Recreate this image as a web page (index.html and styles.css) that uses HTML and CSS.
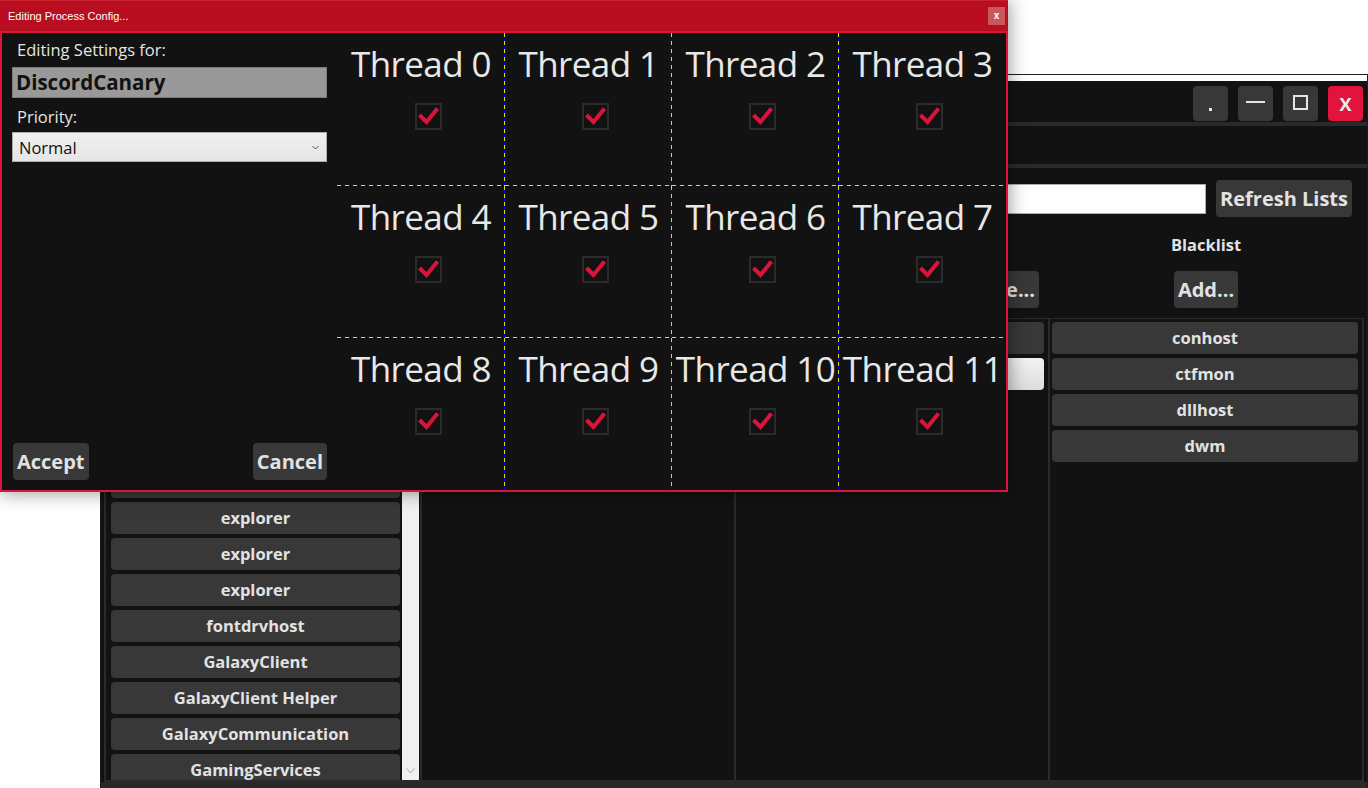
FILE: index.html
```html
<!DOCTYPE html>
<html>
<head>
<meta charset="utf-8">
<link rel="stylesheet" href="styles.css">
</head>
<body>
<div class="bgwin">
  <div class="bgwin-top"></div>
  <div class="win-bar">
    <div class="wbtn"><span class="ic-dot"></span></div>
    <div class="wbtn"><span class="ic-dash"></span></div>
    <div class="wbtn"><span class="ic-sq"></span></div>
    <div class="wbtn wbtn-close">X</div>
  </div>
  <div class="sep"></div>
  <div class="menu-row"></div>
  <div class="sep"></div>
  <div class="content">
    <div class="search-row">
      <div class="search-box"></div>
      <div class="btn">Refresh Lists</div>
    </div>
    <div class="cols labels">
      <div class="col-lbl"></div>
      <div class="col-lbl"></div>
      <div class="col-lbl"></div>
      <div class="col-lbl">Blacklist</div>
    </div>
    <div class="cols actions">
      <div class="col-act"></div>
      <div class="col-act"></div>
      <div class="col-act act-right"><div class="btn">Remove...</div></div>
      <div class="col-act"><div class="btn">Add...</div></div>
    </div>
    <div class="lists">
      <div class="lcol lcol-first">
        <div class="items">
          <div class="item"></div>
          <div class="item"></div>
          <div class="item"></div>
          <div class="item"></div>
          <div class="item"></div>
          <div class="item">explorer</div>
          <div class="item">explorer</div>
          <div class="item">explorer</div>
          <div class="item">fontdrvhost</div>
          <div class="item">GalaxyClient</div>
          <div class="item">GalaxyClient Helper</div>
          <div class="item">GalaxyCommunication</div>
          <div class="item">GamingServices</div>
        </div>
        <div class="scrollbar">
          <svg class="sb-arrow" width="9" height="6" viewBox="0 0 9 6"><path d="M0.5 0.5 L4.5 5 L8.5 0.5" fill="none" stroke="#a6a6a6" stroke-width="1"/></svg>
        </div>
      </div>
      <div class="lcol"></div>
      <div class="lcol">
        <div class="item"></div>
        <div class="item item-sel"></div>
      </div>
      <div class="lcol">
        <div class="item">conhost</div>
        <div class="item">ctfmon</div>
        <div class="item">dllhost</div>
        <div class="item">dwm</div>
      </div>
    </div>
  </div>
  <div class="bgwin-bottom"></div>
</div>

<div class="dialog">
  <div class="dlg-title">
    <span class="dlg-title-text">Editing Process Config...</span>
    <span class="dlg-close">x</span>
  </div>
  <div class="dlg-body">
    <div class="settings">
      <div class="s-label">Editing Settings for:</div>
      <div class="namebox">DiscordCanary</div>
      <div class="s-label s-label2">Priority:</div>
      <div class="select">
        <span>Normal</span>
        <svg width="7" height="5" viewBox="0 0 7 5"><path d="M0.5 1 L3.5 4 L6.5 1" fill="none" stroke="#555" stroke-width="1"/></svg>
      </div>
      <div class="dlg-buttons">
        <div class="btn">Accept</div>
        <div class="btn">Cancel</div>
      </div>
    </div>
    <div class="threads">
      <div class="cell"><div class="t-name">Thread 0</div><div class="chk"><svg viewBox="0 0 23 23" width="23" height="23"><path d="M2.5 10 L9.5 17 L20.5 3.5" fill="none" stroke="#dc143c" stroke-width="4"/></svg></div></div>
      <div class="cell"><div class="t-name">Thread 1</div><div class="chk"><svg viewBox="0 0 23 23" width="23" height="23"><path d="M2.5 10 L9.5 17 L20.5 3.5" fill="none" stroke="#dc143c" stroke-width="4"/></svg></div></div>
      <div class="cell"><div class="t-name">Thread 2</div><div class="chk"><svg viewBox="0 0 23 23" width="23" height="23"><path d="M2.5 10 L9.5 17 L20.5 3.5" fill="none" stroke="#dc143c" stroke-width="4"/></svg></div></div>
      <div class="cell"><div class="t-name">Thread 3</div><div class="chk"><svg viewBox="0 0 23 23" width="23" height="23"><path d="M2.5 10 L9.5 17 L20.5 3.5" fill="none" stroke="#dc143c" stroke-width="4"/></svg></div></div>
      <div class="cell"><div class="t-name">Thread 4</div><div class="chk"><svg viewBox="0 0 23 23" width="23" height="23"><path d="M2.5 10 L9.5 17 L20.5 3.5" fill="none" stroke="#dc143c" stroke-width="4"/></svg></div></div>
      <div class="cell"><div class="t-name">Thread 5</div><div class="chk"><svg viewBox="0 0 23 23" width="23" height="23"><path d="M2.5 10 L9.5 17 L20.5 3.5" fill="none" stroke="#dc143c" stroke-width="4"/></svg></div></div>
      <div class="cell"><div class="t-name">Thread 6</div><div class="chk"><svg viewBox="0 0 23 23" width="23" height="23"><path d="M2.5 10 L9.5 17 L20.5 3.5" fill="none" stroke="#dc143c" stroke-width="4"/></svg></div></div>
      <div class="cell"><div class="t-name">Thread 7</div><div class="chk"><svg viewBox="0 0 23 23" width="23" height="23"><path d="M2.5 10 L9.5 17 L20.5 3.5" fill="none" stroke="#dc143c" stroke-width="4"/></svg></div></div>
      <div class="cell"><div class="t-name">Thread 8</div><div class="chk"><svg viewBox="0 0 23 23" width="23" height="23"><path d="M2.5 10 L9.5 17 L20.5 3.5" fill="none" stroke="#dc143c" stroke-width="4"/></svg></div></div>
      <div class="cell"><div class="t-name">Thread 9</div><div class="chk"><svg viewBox="0 0 23 23" width="23" height="23"><path d="M2.5 10 L9.5 17 L20.5 3.5" fill="none" stroke="#dc143c" stroke-width="4"/></svg></div></div>
      <div class="cell"><div class="t-name">Thread 10</div><div class="chk"><svg viewBox="0 0 23 23" width="23" height="23"><path d="M2.5 10 L9.5 17 L20.5 3.5" fill="none" stroke="#dc143c" stroke-width="4"/></svg></div></div>
      <div class="cell"><div class="t-name">Thread 11</div><div class="chk"><svg viewBox="0 0 23 23" width="23" height="23"><path d="M2.5 10 L9.5 17 L20.5 3.5" fill="none" stroke="#dc143c" stroke-width="4"/></svg></div></div>
    </div>
  </div>
</div>
</body>
</html>
```

FILE: styles.css
```css
html, body {
  margin: 0;
  padding: 0;
}
body {
  width: 1368px;
  height: 788px;
  overflow: hidden;
  background: #ffffff;
  position: relative;
  font-family: "Open Sans", "Noto Sans", sans-serif;
}

/* ---------- background window ---------- */
.bgwin {
  position: absolute;
  left: 100px;
  top: 74px;
  width: 1268px;
  height: 714px;
  box-sizing: border-box;
  border: 1px solid #1c1c1c;
  border-bottom: 0;
  background: #121212;
  display: flex;
  flex-direction: column;
}
.bgwin-top {
  height: 6px;
  background: #ffffff;
}
.win-bar {
  height: 41px;
  box-sizing: border-box;
  padding: 5px 4px 0 0;
  display: flex;
  justify-content: flex-end;
  align-items: flex-start;
  gap: 10px;
}
.wbtn {
  width: 35px;
  height: 35px;
  border-radius: 4px;
  background: #383838;
  display: flex;
  align-items: center;
  justify-content: center;
  color: #e6e6e6;
}
.ic-dot {
  width: 3px;
  height: 3px;
  background: #e6e6e6;
  margin-top: 11px;
}
.ic-dash {
  width: 19px;
  height: 2px;
  background: #e6e6e6;
  margin-top: -3px;
}
.ic-sq {
  width: 11px;
  height: 11px;
  border: 2px solid #e6e6e6;
  margin-top: -2px;
}
.wbtn-close {
  background: #e0143c;
  font-weight: 700;
  font-size: 18px;
  line-height: 1;
  color: #eeeeee;
}
.sep {
  height: 4px;
  background: #2a2a2a;
}
.menu-row {
  height: 38px;
}
.content {
  flex: 1;
  min-height: 0;
  display: flex;
  flex-direction: column;
  padding: 0 3px;
}
.search-row {
  display: flex;
  align-items: center;
  justify-content: flex-end;
  gap: 10px;
  padding: 12px 12px 0 0;
}
.search-box {
  width: 560px;
  height: 30px;
  box-sizing: border-box;
  background: #ffffff;
  border: 1px solid #abadb3;
}
.btn {
  height: 37px;
  box-sizing: border-box;
  padding: 0 4px;
  border-radius: 4px;
  background: #383838;
  color: #e2e2e2;
  font-weight: 700;
  font-size: 20px;
  line-height: 37px;
  white-space: nowrap;
}
.cols {
  display: grid;
  grid-template-columns: 316px 314px 314px 1fr;
}
.labels {
  margin-top: 16px;
}
.col-lbl {
  height: 24px;
  text-align: center;
  font-weight: 700;
  font-size: 16.5px;
  line-height: 24px;
  color: #e2e2e2;
}
.actions {
  margin-top: 14px;
}
.col-act {
  display: flex;
  justify-content: center;
}
.act-right {
  justify-content: flex-end;
  padding-right: 9px;
}
.lists {
  margin-top: 10px;
  flex: 1;
  min-height: 0;
  display: grid;
  grid-template-columns: 316px 314px 314px 1fr;
  border-top: 1px solid #2a2a2a;
  border-bottom: 2px solid #2a2a2a;
  border-right: 2px solid #2a2a2a;
  overflow: hidden;
}
.lcol {
  border-left: 2px solid #2a2a2a;
  padding: 3px 4px 0 2px;
  display: flex;
  flex-direction: column;
  gap: 4px;
  overflow: hidden;
  min-height: 0;
}
.lcol-first {
  flex-direction: row;
  gap: 2px;
  padding: 0 1px 0 5px;
}
.items {
  width: 289px;
  padding-top: 3px;
  display: flex;
  flex-direction: column;
  gap: 4px;
  overflow: hidden;
}
.scrollbar {
  width: 17px;
  background: #f0f0f0;
  position: relative;
}
.sb-arrow {
  position: absolute;
  left: 4px;
  bottom: 6px;
}
.item {
  flex: none;
  height: 32px;
  border-radius: 4px;
  background: #383838;
  color: #e2e2e2;
  font-weight: 700;
  font-size: 16.5px;
  line-height: 32px;
  text-align: center;
  white-space: nowrap;
}
.item-sel {
  background: linear-gradient(#f2f2f2, #dcdcdc);
  color: #222;
}
.bgwin-bottom {
  height: 6px;
  background: #282828;
}

/* ---------- dialog ---------- */
.dialog {
  position: absolute;
  left: 0;
  top: 0;
  width: 1008px;
  height: 492px;
  display: flex;
  flex-direction: column;
  box-shadow: 0 0 18px rgba(0, 0, 0, 0.45);
}
.dlg-title {
  height: 31px;
  box-sizing: border-box;
  background: #b80e1f;
  border-top: 1px solid #c8202f;
  display: flex;
  align-items: center;
  justify-content: space-between;
  padding: 0 3px 0 8px;
}
.dlg-title-text {
  font-family: "Liberation Sans", Arial, sans-serif;
  font-size: 11px;
  color: #ffffff;
}
.dlg-close {
  width: 17px;
  height: 18px;
  background: #c9585e;
  color: #ffffff;
  font-family: "Liberation Sans", Arial, sans-serif;
  font-weight: 700;
  font-size: 10px;
  line-height: 17px;
  text-align: center;
}
.dlg-body {
  flex: 1;
  min-height: 0;
  border: 2px solid #dc143c;
  background: #121212;
  display: flex;
}
.settings {
  width: 335px;
  flex: none;
  box-sizing: border-box;
  padding: 0 10px 10px 10px;
  display: flex;
  flex-direction: column;
}
.s-label {
  margin-top: 6px;
  padding-left: 5px;
  font-size: 16.5px;
  line-height: 22px;
  color: #e4e4e4;
}
.s-label2 {
  margin-top: 8px;
}
.namebox {
  margin-top: 6px;
  height: 31px;
  box-sizing: border-box;
  background: #999999;
  border: 1px solid #7c7c7c;
  padding-left: 3px;
  font-weight: 700;
  font-size: 20.5px;
  line-height: 29px;
  color: #111111;
}
.select {
  margin-top: 4px;
  height: 30px;
  box-sizing: border-box;
  border: 1px solid #acacac;
  background: linear-gradient(#f0f0f0, #e5e5e5);
  display: flex;
  align-items: center;
  justify-content: space-between;
  padding: 0 7px 0 6px;
  font-size: 16.5px;
  color: #111111;
}
.dlg-buttons {
  margin-top: auto;
  display: flex;
  justify-content: space-between;
  padding-left: 1px;
}

.threads {
  flex: 1;
  display: grid;
  grid-template-columns: 168px 167px 167px 1fr;
  grid-template-rows: 153px 152px 1fr;
}
.cell {
  display: flex;
  flex-direction: column;
  align-items: center;
  background:
    repeating-linear-gradient(180deg, #e0e000 0 4px, #0000d0 4px 8px) right top / 1px 100% no-repeat,
    repeating-linear-gradient(90deg, #e0e000 0 4px, #0000d0 4px 8px) left bottom / 100% 1px no-repeat;
}
.cell:nth-child(4n) {
  background:
    repeating-linear-gradient(90deg, #e0e000 0 4px, #0000d0 4px 8px) left bottom / 100% 1px no-repeat;
}
.cell:nth-child(n+9) {
  background:
    repeating-linear-gradient(180deg, #e0e000 0 4px, #0000d0 4px 8px) right top / 1px 100% no-repeat;
}
.cell:nth-child(12) {
  background: none;
}
.t-name {
  margin-top: 8px;
  font-size: 35px;
  line-height: 46px;
  letter-spacing: -0.6px;
  color: #e8e8e8;
  white-space: nowrap;
}
.chk {
  margin-top: 16px;
  margin-left: 14px;
  width: 27px;
  height: 27px;
  box-sizing: border-box;
  border: 2px solid #2b2b2b;
  display: flex;
  align-items: center;
  justify-content: center;
}
.chk svg {
  display: block;
}
```
